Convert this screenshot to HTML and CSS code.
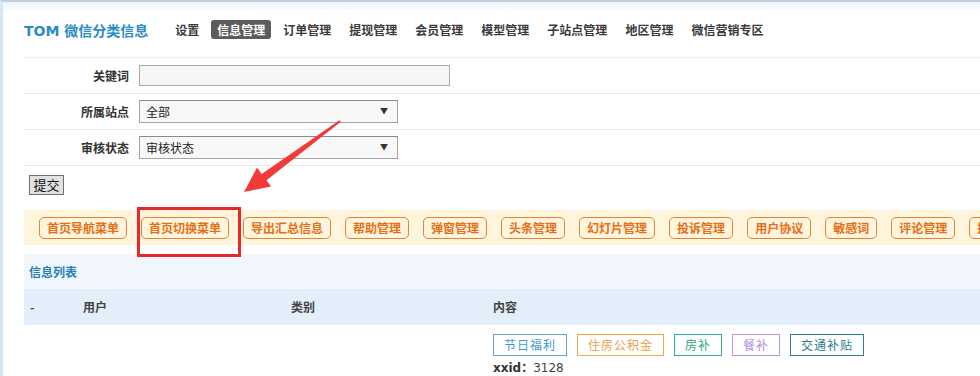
FILE: index.html
```html
<!doctype html>
<html lang="zh">
<head>
  <meta charset="UTF-8">
  <title>TOM 微信分类信息</title>
  <link rel="stylesheet" href="styles.css">
</head>
<body>
  <div class="frame">
    <div class="header">
      <div class="logo">TOM 微信分类信息</div>
      <ul class="nav">
        <li>设置</li>
        <li class="on">信息管理</li>
        <li>订单管理</li>
        <li>提现管理</li>
        <li>会员管理</li>
        <li>模型管理</li>
        <li>子站点管理</li>
        <li>地区管理</li>
        <li>微信营销专区</li>
      </ul>
    </div>

    <form class="search">
      <div class="row">
        <label>关键词</label>
        <input type="text" class="txt">
      </div>
      <div class="row">
        <label>所属站点</label>
        <span class="sel"><select><option>全部</option></select></span>
      </div>
      <div class="row">
        <label>审核状态</label>
        <span class="sel"><select><option>审核状态</option></select></span>
      </div>
      <div class="submit"><button type="button">提交</button></div>
    </form>

    <div class="toolbar">
      <a>首页导航菜单</a>
      <a>首页切换菜单</a>
      <a>导出汇总信息</a>
      <a>帮助管理</a>
      <a>弹窗管理</a>
      <a>头条管理</a>
      <a>幻灯片管理</a>
      <a>投诉管理</a>
      <a>用户协议</a>
      <a>敏感词</a>
      <a>评论管理</a>
      <a>推送管理</a>
    </div>

    <div class="listtitle">信息列表</div>
    <div class="thead">
      <div>-</div>
      <div>用户</div>
      <div>类别</div>
      <div>内容</div>
    </div>
    <div class="trow">
      <div></div>
      <div></div>
      <div></div>
      <div>
        <div class="tags">
          <span class="tag blue">节日福利</span>
          <span class="tag orange">住房公积金</span>
          <span class="tag green">房补</span>
          <span class="tag purple">餐补</span>
          <span class="tag teal">交通补贴</span>
        </div>
        <div class="xxid"><b>xxid：</b>3128</div>
      </div>
    </div>
  </div>

  <svg class="marks" width="980" height="376" viewBox="0 0 980 376">
    <polygon points="340.8,121.8 266.5,180.3 271,186.5 244,192 257,167.5 261.7,173.9 339.4,120.2" fill="#f23a3a"/>
    <rect x="138.5" y="208.5" width="101" height="47" fill="none" stroke="#e62a2a" stroke-width="3"/>
  </svg>
</body>
</html>
```

FILE: styles.css
```css
html, body{
  margin:0;
  padding:0;
}
body {
  position: relative;
  width: 980px;
  height: 376px;
  overflow: hidden;
  background: #fff;
  font-family: "Noto Sans CJK SC", sans-serif;
  font-size: 12px;
  color: #333;
}
.frame {
  border-left: 3px solid #d6e7f4;
  border-top: 2px solid #bcd1e2;
  padding-left: 21px;
  height: 374px;
  background: linear-gradient(#eaf3fa, #fff 10px);
}
.header {
  display: flex;
  align-items: center;
  height: 55px;
  border-bottom: 1px solid #ececec;
}
.logo {
  font-family: "DejaVu Sans", "Noto Sans CJK SC", sans-serif;
  font-size: 14px;
  font-weight: bold;
  color: #2a8cc4;
}
.nav {
  display: flex;
  gap: 6px;
  list-style: none;
  margin: 0 0 0 21px;
  padding: 0;
}
.nav li {
  padding: 0 6px;
  height: 19px;
  line-height: 19px;
  font-weight: bold;
  color: #3a3a3a;
  border-radius: 3px;
}
.nav li.on {
  background: #5c5c5c;
  color: #fff;
}

.row {
  display: flex;
  align-items: center;
  height: 35px;
  border-bottom: 1px solid #e8e8e8;
}
.row label {
  width: 115px;
  padding-right: 10px;
  box-sizing: border-box;
  text-align: right;
  font-weight: bold;
  color: #333;
}
.txt {
  width: 311px;
  height: 21px;
  box-sizing: border-box;
  border: 1px solid #a9a9a9;
  background: #f6f6f6;
  margin: 0;
}
.sel {
  position: relative;
  display: block;
}
.sel select {
  appearance: none;
  -webkit-appearance: none;
  width: 259px;
  height: 23px;
  box-sizing: border-box;
  border: 1px solid #a5a5a5;
  border-top-color: #8a8a8a;
  background: #f8f8f8;
  margin: 0;
  padding: 0 6px;
  font-family: "Noto Sans CJK SC", sans-serif;
  font-size: 12px;
  color: #222;
}
.sel::after {
  content: "▼";
  position: absolute;
  right: 10px;
  top: 5px;
  font-size: 8px;
  color: #333;
  pointer-events: none;
}
.submit {
  margin: 9px 0 0 5px;
}
.submit button {
  height: 20px;
  width: 35px;
  padding: 0;
  border: 1px solid #707070;
  background: #e1e1e1;
  font-family: "Noto Sans CJK SC", sans-serif;
  font-size: 13px;
  color: #111;
  line-height: 18px;
}

.toolbar {
  display: flex;
  align-items: center;
  gap: 14px;
  margin-top: 15px;
  height: 35px;
  padding-left: 15px;
  background: #fff4dc;
  overflow: hidden;
  white-space: nowrap;
}
.toolbar a {
  flex: none;
  height: 22px;
  line-height: 20px;
  box-sizing: border-box;
  padding: 0 7px;
  border: 1px solid #e0843a;
  border-radius: 5px;
  font-weight: bold;
  color: #e66f16;
}

.listtitle {
  margin-top: 9px;
  height: 35px;
  line-height: 35px;
  padding-left: 5px;
  background: #f1f6fc;
  font-weight: bold;
  color: #1f80b9;
}
.thead, .trow {
  display: grid;
  grid-template-columns: 53px 208px 202px 1fr;
}
.thead {
  height: 36px;
  line-height: 36px;
  background: #e2eef9;
  font-weight: bold;
  color: #444;
}
.thead div, .trow > div {
  padding-left: 6px;
}
.trow {
  padding-top: 9px;
}
.tags {
  display: flex;
  gap: 10px;
}
.tag {
  height: 22px;
  line-height: 20px;
  box-sizing: border-box;
  padding: 0 10px;
  border: 1px solid;
  letter-spacing: 1px;
}
.blue { border-color: #5aa7d8; color: #3d97d0; }
.orange { border-color: #eea64a; color: #eba14c; }
.green { border-color: #33ad8c; color: #2ea786; }
.purple { border-color: #bd96e2; color: #b68bdf; }
.teal { border-color: #31808f; color: #2e7c8b; }
.xxid {
  margin-top: 3px;
  font-family: "DejaVu Sans", "Noto Sans CJK SC", sans-serif;
  font-size: 12px;
  line-height: 18px;
  color: #444;
}
.xxid b {
  color: #333;
}

.marks {
  position: absolute;
  left: 0;
  top: 0;
  pointer-events: none;
}
```
